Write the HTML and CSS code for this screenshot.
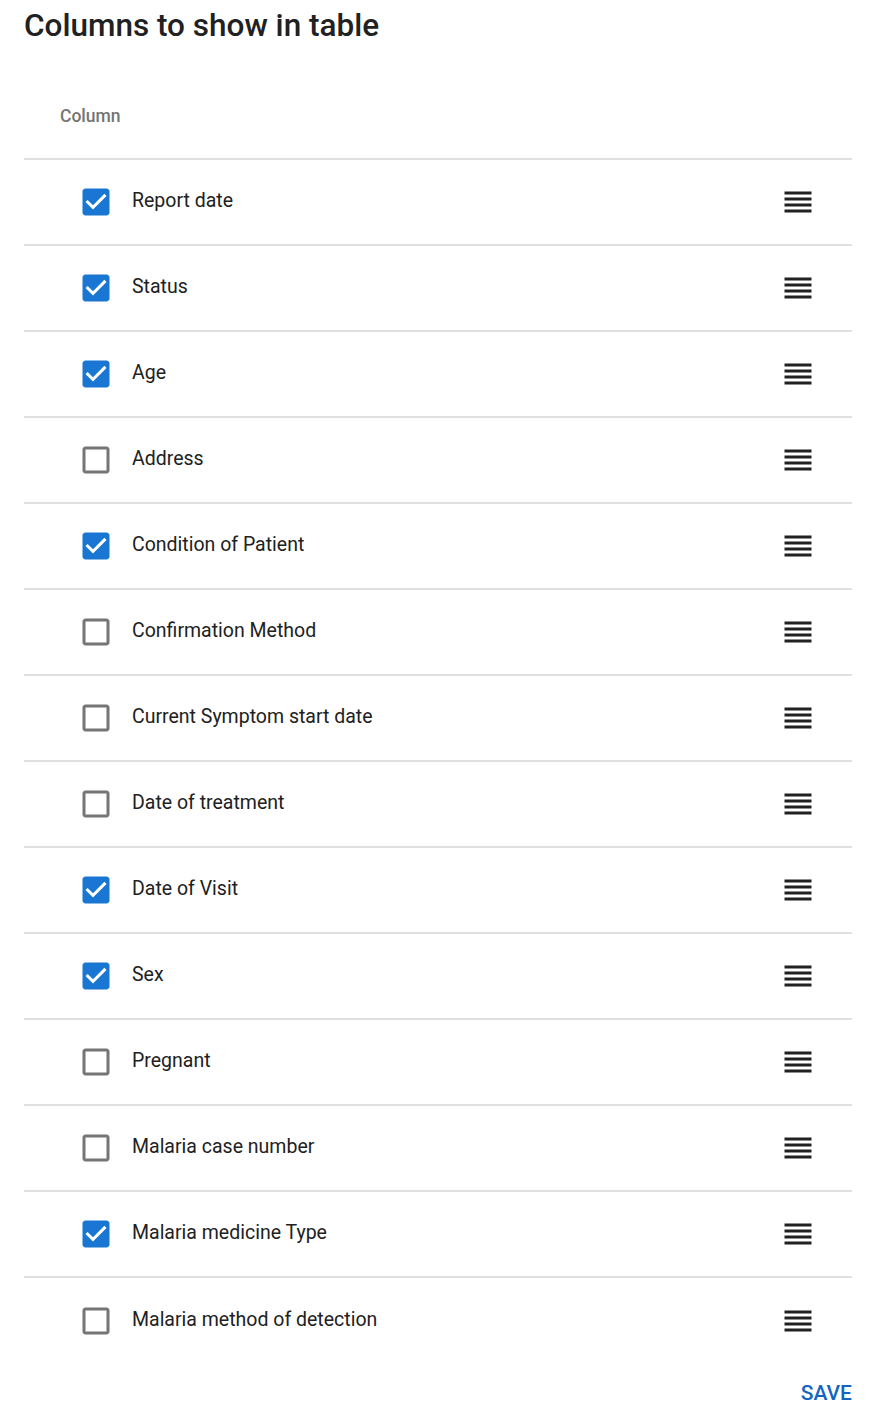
FILE: index.html
```html
<!DOCTYPE html>
<html>
<head>
<meta charset="utf-8">
<link rel="stylesheet" href="styles.css">
</head>
<body>
<div class="dialog">
  <h2 class="title">Columns to show in table</h2>
  <div class="table">
    <div class="head"><span class="head-label">Column</span></div>
    <div class="row"><span class="cb on"><svg viewBox="0 0 24 24"><path d="M19 3H5c-1.11 0-2 .9-2 2v14c0 1.1.89 2 2 2h14c1.11 0 2-.9 2-2V5c0-1.1-.89-2-2-2zm-9 14l-5-5 1.41-1.41L10 14.17l7.59-7.59L19 8l-9 9z"/></svg></span><span class="label">Report date</span><span class="drag"><svg viewBox="0 0 24 24"><path d="M3 15h18v-2H3v2zm0 4h18v-2H3v2zm0-8h18V9H3v2zm0-6v2h18V5H3z"/></svg></span></div>
    <div class="row"><span class="cb on"><svg viewBox="0 0 24 24"><path d="M19 3H5c-1.11 0-2 .9-2 2v14c0 1.1.89 2 2 2h14c1.11 0 2-.9 2-2V5c0-1.1-.89-2-2-2zm-9 14l-5-5 1.41-1.41L10 14.17l7.59-7.59L19 8l-9 9z"/></svg></span><span class="label">Status</span><span class="drag"><svg viewBox="0 0 24 24"><path d="M3 15h18v-2H3v2zm0 4h18v-2H3v2zm0-8h18V9H3v2zm0-6v2h18V5H3z"/></svg></span></div>
    <div class="row"><span class="cb on"><svg viewBox="0 0 24 24"><path d="M19 3H5c-1.11 0-2 .9-2 2v14c0 1.1.89 2 2 2h14c1.11 0 2-.9 2-2V5c0-1.1-.89-2-2-2zm-9 14l-5-5 1.41-1.41L10 14.17l7.59-7.59L19 8l-9 9z"/></svg></span><span class="label">Age</span><span class="drag"><svg viewBox="0 0 24 24"><path d="M3 15h18v-2H3v2zm0 4h18v-2H3v2zm0-8h18V9H3v2zm0-6v2h18V5H3z"/></svg></span></div>
    <div class="row"><span class="cb off"><svg viewBox="0 0 24 24"><path d="M19 5v14H5V5h14m0-2H5c-1.1 0-2 .9-2 2v14c0 1.1.9 2 2 2h14c1.1 0 2-.9 2-2V5c0-1.1-.9-2-2-2z"/></svg></span><span class="label">Address</span><span class="drag"><svg viewBox="0 0 24 24"><path d="M3 15h18v-2H3v2zm0 4h18v-2H3v2zm0-8h18V9H3v2zm0-6v2h18V5H3z"/></svg></span></div>
    <div class="row"><span class="cb on"><svg viewBox="0 0 24 24"><path d="M19 3H5c-1.11 0-2 .9-2 2v14c0 1.1.89 2 2 2h14c1.11 0 2-.9 2-2V5c0-1.1-.89-2-2-2zm-9 14l-5-5 1.41-1.41L10 14.17l7.59-7.59L19 8l-9 9z"/></svg></span><span class="label">Condition of Patient</span><span class="drag"><svg viewBox="0 0 24 24"><path d="M3 15h18v-2H3v2zm0 4h18v-2H3v2zm0-8h18V9H3v2zm0-6v2h18V5H3z"/></svg></span></div>
    <div class="row"><span class="cb off"><svg viewBox="0 0 24 24"><path d="M19 5v14H5V5h14m0-2H5c-1.1 0-2 .9-2 2v14c0 1.1.9 2 2 2h14c1.1 0 2-.9 2-2V5c0-1.1-.9-2-2-2z"/></svg></span><span class="label">Confirmation Method</span><span class="drag"><svg viewBox="0 0 24 24"><path d="M3 15h18v-2H3v2zm0 4h18v-2H3v2zm0-8h18V9H3v2zm0-6v2h18V5H3z"/></svg></span></div>
    <div class="row"><span class="cb off"><svg viewBox="0 0 24 24"><path d="M19 5v14H5V5h14m0-2H5c-1.1 0-2 .9-2 2v14c0 1.1.9 2 2 2h14c1.1 0 2-.9 2-2V5c0-1.1-.9-2-2-2z"/></svg></span><span class="label">Current Symptom start date</span><span class="drag"><svg viewBox="0 0 24 24"><path d="M3 15h18v-2H3v2zm0 4h18v-2H3v2zm0-8h18V9H3v2zm0-6v2h18V5H3z"/></svg></span></div>
    <div class="row"><span class="cb off"><svg viewBox="0 0 24 24"><path d="M19 5v14H5V5h14m0-2H5c-1.1 0-2 .9-2 2v14c0 1.1.9 2 2 2h14c1.1 0 2-.9 2-2V5c0-1.1-.9-2-2-2z"/></svg></span><span class="label">Date of treatment</span><span class="drag"><svg viewBox="0 0 24 24"><path d="M3 15h18v-2H3v2zm0 4h18v-2H3v2zm0-8h18V9H3v2zm0-6v2h18V5H3z"/></svg></span></div>
    <div class="row"><span class="cb on"><svg viewBox="0 0 24 24"><path d="M19 3H5c-1.11 0-2 .9-2 2v14c0 1.1.89 2 2 2h14c1.11 0 2-.9 2-2V5c0-1.1-.89-2-2-2zm-9 14l-5-5 1.41-1.41L10 14.17l7.59-7.59L19 8l-9 9z"/></svg></span><span class="label">Date of Visit</span><span class="drag"><svg viewBox="0 0 24 24"><path d="M3 15h18v-2H3v2zm0 4h18v-2H3v2zm0-8h18V9H3v2zm0-6v2h18V5H3z"/></svg></span></div>
    <div class="row"><span class="cb on"><svg viewBox="0 0 24 24"><path d="M19 3H5c-1.11 0-2 .9-2 2v14c0 1.1.89 2 2 2h14c1.11 0 2-.9 2-2V5c0-1.1-.89-2-2-2zm-9 14l-5-5 1.41-1.41L10 14.17l7.59-7.59L19 8l-9 9z"/></svg></span><span class="label">Sex</span><span class="drag"><svg viewBox="0 0 24 24"><path d="M3 15h18v-2H3v2zm0 4h18v-2H3v2zm0-8h18V9H3v2zm0-6v2h18V5H3z"/></svg></span></div>
    <div class="row"><span class="cb off"><svg viewBox="0 0 24 24"><path d="M19 5v14H5V5h14m0-2H5c-1.1 0-2 .9-2 2v14c0 1.1.9 2 2 2h14c1.1 0 2-.9 2-2V5c0-1.1-.9-2-2-2z"/></svg></span><span class="label">Pregnant</span><span class="drag"><svg viewBox="0 0 24 24"><path d="M3 15h18v-2H3v2zm0 4h18v-2H3v2zm0-8h18V9H3v2zm0-6v2h18V5H3z"/></svg></span></div>
    <div class="row"><span class="cb off"><svg viewBox="0 0 24 24"><path d="M19 5v14H5V5h14m0-2H5c-1.1 0-2 .9-2 2v14c0 1.1.9 2 2 2h14c1.1 0 2-.9 2-2V5c0-1.1-.9-2-2-2z"/></svg></span><span class="label">Malaria case number</span><span class="drag"><svg viewBox="0 0 24 24"><path d="M3 15h18v-2H3v2zm0 4h18v-2H3v2zm0-8h18V9H3v2zm0-6v2h18V5H3z"/></svg></span></div>
    <div class="row"><span class="cb on"><svg viewBox="0 0 24 24"><path d="M19 3H5c-1.11 0-2 .9-2 2v14c0 1.1.89 2 2 2h14c1.11 0 2-.9 2-2V5c0-1.1-.89-2-2-2zm-9 14l-5-5 1.41-1.41L10 14.17l7.59-7.59L19 8l-9 9z"/></svg></span><span class="label">Malaria medicine Type</span><span class="drag"><svg viewBox="0 0 24 24"><path d="M3 15h18v-2H3v2zm0 4h18v-2H3v2zm0-8h18V9H3v2zm0-6v2h18V5H3z"/></svg></span></div>
    <div class="row last"><span class="cb off"><svg viewBox="0 0 24 24"><path d="M19 5v14H5V5h14m0-2H5c-1.1 0-2 .9-2 2v14c0 1.1.9 2 2 2h14c1.1 0 2-.9 2-2V5c0-1.1-.9-2-2-2z"/></svg></span><span class="label">Malaria method of detection</span><span class="drag"><svg viewBox="0 0 24 24"><path d="M3 15h18v-2H3v2zm0 4h18v-2H3v2zm0-8h18V9H3v2zm0-6v2h18V5H3z"/></svg></span></div>
  </div>
  <div class="actions"><button class="save">SAVE</button></div>
</div>
</body>
</html>
```
FILE: styles.css
```css
* { box-sizing: border-box; }
body {
  margin: 0;
  background: #fff;
  font-family: Roboto, "Liberation Sans", sans-serif;
  color: rgba(0,0,0,0.87);
}
.dialog {
  width: 880px;
  padding: 0 28px 0 24px;
}
.title {
  margin: 0;
  padding-top: 6px;
  font-size: 31.5px;
  line-height: 40px;
  font-weight: 500;
  color: #212121;
}
.table {
  margin-top: 26px;
}
.head {
  height: 88px;
  border-bottom: 2px solid #e0e0e0;
  display: flex;
  align-items: center;
  padding-left: 36px;
  padding-top: 2px;
}
.head-label {
  font-size: 17.5px;
  font-weight: 500;
  color: #757575;
  line-height: 20px;
}
.row {
  height: 86px;
  border-bottom: 2px solid #e0e0e0;
  display: flex;
  align-items: center;
  padding-left: 54px;
}
.row.last { border-bottom: none; }
.cb {
  width: 36px;
  height: 36px;
  display: flex;
}
.cb svg, .drag svg { width: 36px; height: 36px; display: block; }
.cb.on svg { fill: #1976d2; }
.cb.off svg { fill: #757575; }
.label {
  margin-left: 18px;
  font-size: 19.5px;
  line-height: 24px;
  padding-bottom: 3px;
  color: #212121;
  flex: 1;
}
.drag {
  width: 36px;
  height: 36px;
  margin-right: 36px;
}
.drag svg { fill: #212121; }
.actions {
  display: flex;
  justify-content: flex-end;
  padding-top: 15px;
}
.save {
  background: none;
  border: none;
  padding: 0;
  font-family: Roboto, "Liberation Sans", sans-serif;
  font-size: 21px;
  font-weight: 500;
  color: #1565c0;
  line-height: 28px;
}
```
